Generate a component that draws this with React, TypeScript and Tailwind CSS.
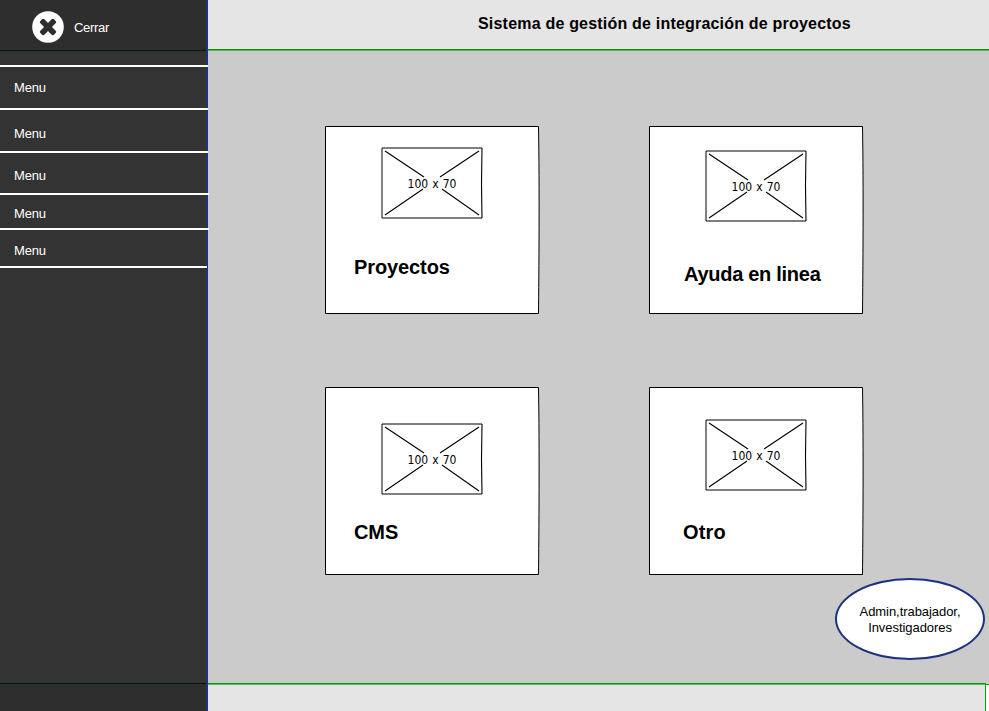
const ARIAL = "font-['Liberation_Sans',Arial,sans-serif]";

const menuItems = [
  { label: 'Menu', box: 'h-[43px] w-[208px] pt-[13px]' },
  { label: 'Menu', box: 'h-[43px] w-[208px] pt-[16px]' },
  { label: 'Menu', box: 'h-[42px] w-[209px] pt-[15px]' },
  { label: 'Menu', box: 'h-[35px] w-[209px] pt-[11px]' },
  { label: 'Menu', box: 'h-[38px] w-[207px] pt-[13px]' },
];

const cards = [
  { title: 'Proyectos', pad: 'pt-[21px] pl-[56px]', text: 'mt-[36px] -ml-[27px] tracking-[-0.1px]' },
  { title: 'Ayuda en linea', pad: 'pt-[24px] pl-[56px]', text: 'mt-[40px] -ml-[21px] tracking-[-0.28px]' },
  { title: 'CMS', pad: 'pt-[36px] pl-[56px]', text: 'mt-[25px] -ml-[27px] tracking-[-0.1px]' },
  { title: 'Otro', pad: 'pt-[32px] pl-[56px]', text: 'mt-[29px] -ml-[22px] tracking-[0.2px]' },
];

function Placeholder() {
  return (
    <svg className="block" width="102" height="72" viewBox="0 0 102 72" fill="none">
      <path d="M101 1H1V71H101" stroke="#000" />
      <path d="M101 1Q100 36 101 71" stroke="#000" strokeWidth="1.1" />
      <path d="M4 4L43 30M98 4L59 30M4 68L42 42M98 68L61 42" stroke="#000" strokeWidth="1.1" />
      <text
        x="51"
        y="41"
        textAnchor="middle"
        fill="#000"
        className="font-['DejaVu_Sans_Condensed','DejaVu_Sans',sans-serif] text-[12px] [word-spacing:0.6px]"
      >
        100 x 70
      </text>
    </svg>
  );
}

function Card({ title, pad, text }: { title: string; pad: string; text: string }) {
  return (
    <div className={`relative h-[188px] w-[214px] ${pad}`}>
      <svg className="absolute inset-0 overflow-visible" width="214" height="188">
        <path d="M213.5 .5H.5V187.5H213.5C213.9 150 214.6 60 213.5 .5Z" fill="#fff" stroke="#000" />
      </svg>
      <div className="relative">
        <Placeholder />
        <h2 className={`text-[20px] leading-[24px] font-bold whitespace-nowrap ${text}`}>{title}</h2>
      </div>
    </div>
  );
}

export default function App() {
  return (
    <div className={`flex h-[711px] w-[989px] overflow-hidden bg-[#cbcbcb] text-black ${ARIAL}`}>
      <aside className="flex w-[208px] shrink-0 flex-col border-r-2 border-[#1d3280] bg-[#333333] text-white">
        <header className="flex h-[51px] items-center border-b border-[#001c00] bg-[#2e2e2e] pt-[4px] pl-[32px]">
          <svg width="32" height="32" viewBox="0 0 32 32">
            <circle cx="16" cy="16" r="15.8" fill="#fff" />
            <g fill="#2e2e2e">
              <rect x="6.4" y="13.2" width="19.2" height="5.6" rx="1.6" transform="rotate(45 16 16)" />
              <rect x="6.4" y="13.2" width="19.2" height="5.6" rx="1.6" transform="rotate(-45 16 16)" />
            </g>
          </svg>
          <span className="mt-[2px] ml-[10px] text-[13px] leading-4 tracking-[-0.3px]">Cerrar</span>
        </header>
        <nav className="mt-[14px] flex-1">
          <div className="h-[2px] w-[208px] bg-white" />
          {menuItems.map((item, i) => (
            <div key={i} className={`relative border-b-2 border-white pl-[14px] text-[13px] leading-4 tracking-[-0.2px] ${item.box}`}>
              {item.label}
            </div>
          ))}
        </nav>
        <footer className="h-[28px] border-t border-[#001c00] bg-[#2e2e2e]" />
      </aside>
      <div className="flex flex-1 flex-col">
        <header className="h-[50px] border-b border-[#0a910a] bg-[#e5e5e5] pt-[14px] pl-[270px]">
          <h1 className="text-[16px] leading-5 font-bold tracking-[0.2px] whitespace-nowrap">
            Sistema de gestión de integración de proyectos
          </h1>
        </header>
        <main className="relative flex-1 border-t border-[#55b055] pt-[75px] pl-[117px]">
          <div className="grid w-[538px] grid-cols-[214px_214px] gap-x-[110px] gap-y-[73px]">
            {cards.map((card) => (
              <Card key={card.title} {...card} />
            ))}
          </div>
          <div className="absolute top-[527px] left-[627px] flex h-[82px] w-[150px] items-center justify-center rounded-[50%] border-2 border-[#1d3280] bg-white pt-[2px] text-center text-[13px] leading-4 tracking-[-0.06px]">
            <p>
              Admin,trabajador,
              <br />
              Investigadores
            </p>
          </div>
        </main>
        <footer className="flex h-[28px]">
          <div className="w-[778px] border-t border-r border-[#0a9a0a]">
            <div className="h-full border-t border-[#61bd61] bg-[#e5e5e5]" />
          </div>
          <div className="mt-px flex-1 border-t border-[#0a9a0a] bg-white" />
        </footer>
      </div>
    </div>
  );
}
